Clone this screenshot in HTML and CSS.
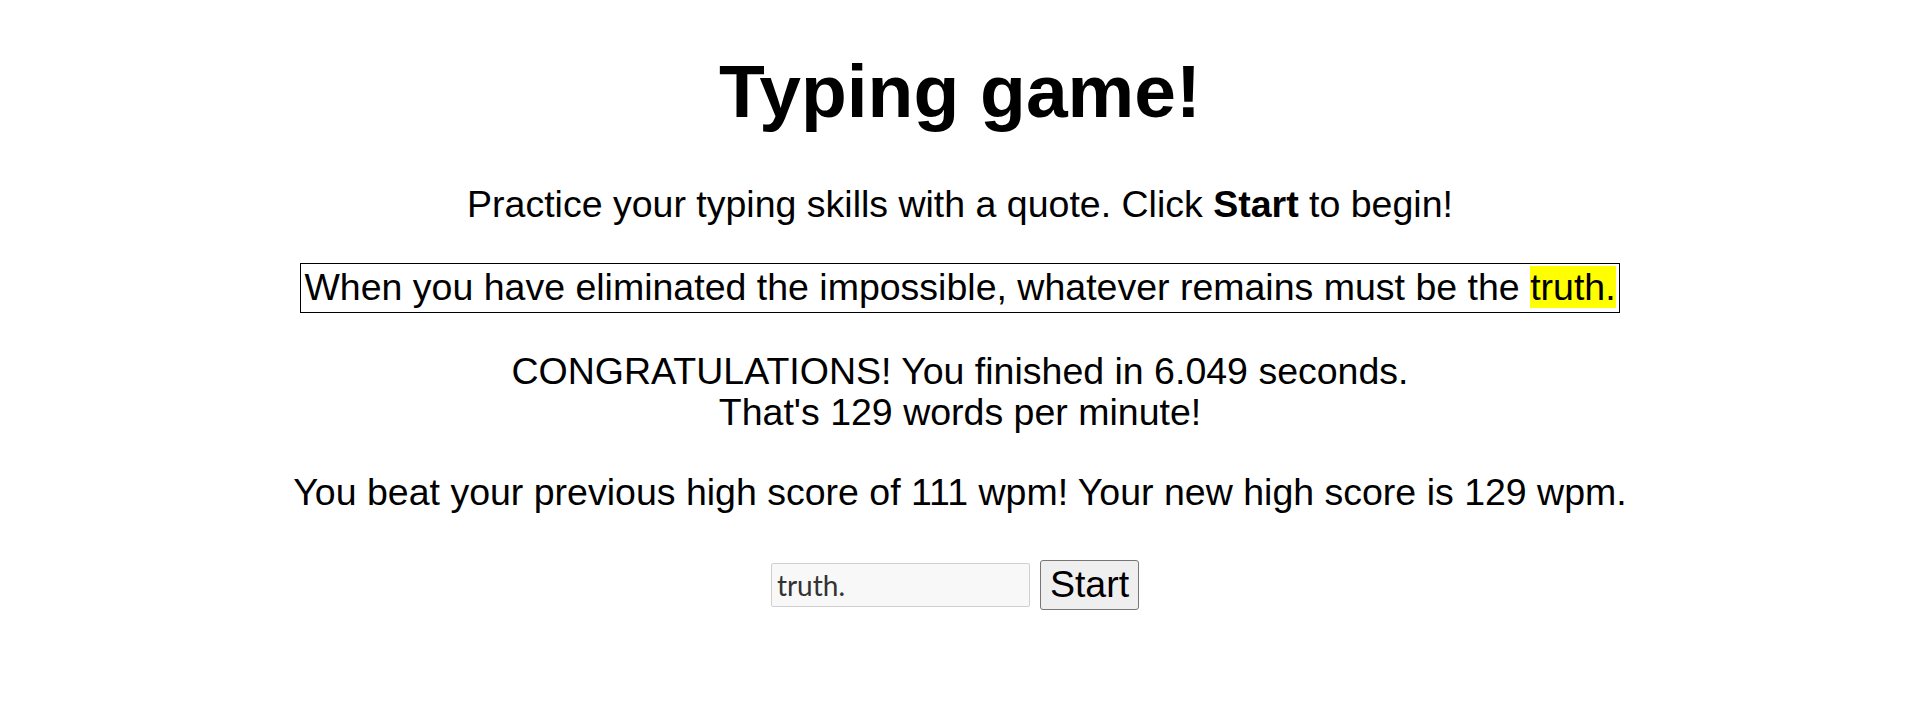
FILE: index.html
```html
<!DOCTYPE html>
<html>
<head>
<meta charset="utf-8">
<title>Typing game</title>
<link rel="stylesheet" href="styles.css">
</head>
<body>
<h1 class="title">Typing game!</h1>
<p class="intro">Practice your typing skills with a quote. Click <strong>Start</strong> to begin!</p>
<p class="quote-wrap"><span class="quote"><span class="word">When</span> <span class="word">you</span> <span class="word">have</span> <span class="word">eliminated</span> <span class="word">the</span> <span class="word">impossible,</span> <span class="word">whatever</span> <span class="word">remains</span> <span class="word">must</span> <span class="word">be</span> <span class="word">the</span> <span class="word highlight">truth.</span></span></p>
<p class="message">CONGRATULATIONS! You finished in 6.049 seconds.<br>That's 129 words per minute!</p>
<p class="score">You beat your previous high score of 111 wpm! Your new high score is 129 wpm.</p>
<div class="controls">
<input class="typed" type="text" value="truth."><button class="start" type="button">Start</button>
</div>
</body>
</html>
```

FILE: styles.css
```css
html, body {
  margin: 0;
  padding: 0;
}
body {
  margin: 8px;
  font-family: "Liberation Sans", Arial, sans-serif;
  font-size: 37.5px;
  line-height: 1.117;
  color: #000;
  background: #fff;
  text-align: center;
}
.title {
  font-size: 2em;
  font-weight: bold;
  margin: 42px 0 50px;
}
.intro,
.quote-wrap,
.message,
.score {
  margin: 1em 0;
}
.quote {
  display: inline-block;
  border: 1px solid #000;
  padding: 3px;
}
.highlight {
  background: #ffff00;
}
.controls {
  margin-top: 46px;
  display: flex;
  justify-content: center;
  align-items: center;
  gap: 10px;
  padding-right: 10px;
}
.typed {
  font-family: Lato, "Open Sans", sans-serif;
  font-size: 28px;
  color: #333;
  width: 259px;
  height: 44px;
  box-sizing: border-box;
  padding: 0 5px;
  border: 1px solid #d0d0d0;
  border-radius: 2px;
  background: #f8f8f8;
}
.start {
  font-family: "Liberation Sans", Arial, sans-serif;
  font-size: 37.5px;
  line-height: 1.117;
  height: 50px;
  padding: 0 9px;
  border: 1px solid #767676;
  border-radius: 3px;
  background: #efefef;
  color: #000;
}
```
